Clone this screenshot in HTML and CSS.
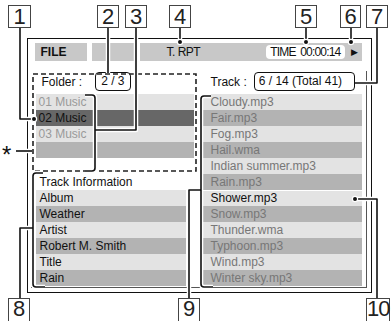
FILE: index.html
```html
<!doctype html>
<html>
<head>
    <meta charset="utf-8" />
    <title>File screen</title>
    <link rel="stylesheet" href="styles.css">
</head>
<body>

<div class="page">

    <div class="panel">
        <div class="bar">
            <span class="tag file">FILE</span>
            <span class="tag blank"></span>
            <div class="tag main">
                <span class="title">T. RPT</span>
                <span class="time">TIME 00:00:14</span>
                <span class="play">&#9654;</span>
            </div>
        </div>

        <div class="screen">
            <div class="left">
                <div class="folders">
                    <div class="head">Folder : <span class="pill">2 / 3</span></div>
                    <div class="row light dim">01 Music</div>
                    <div class="row sel">02 Music</div>
                    <div class="row light dim">03 Music</div>
                    <div class="row dark"></div>
                </div>
                <div class="info">
                    <div class="row plain">Track Information</div>
                    <div class="row light">Album</div>
                    <div class="row dark">Weather</div>
                    <div class="row light">Artist</div>
                    <div class="row dark">Robert M. Smith</div>
                    <div class="row light">Title</div>
                    <div class="row dark">Rain</div>
                </div>
            </div>

            <div class="right">
                <div class="head">Track : <span class="pill wide">6 / 14 (Total 41)</span></div>
                <div class="tracks">
                    <div class="row light dim">Cloudy.mp3</div>
                    <div class="row dark dim">Fair.mp3</div>
                    <div class="row light dim">Fog.mp3</div>
                    <div class="row dark dim">Hail.wma</div>
                    <div class="row light dim">Indian summer.mp3</div>
                    <div class="row dark dim">Rain.mp3</div>
                    <div class="row light now">Shower.mp3</div>
                    <div class="row dark dim">Snow.mp3</div>
                    <div class="row light dim">Thunder.wma</div>
                    <div class="row dark dim">Typhoon.mp3</div>
                    <div class="row light dim">Wind.mp3</div>
                    <div class="row dark dim">Winter sky.mp3</div>
                </div>
            </div>
        </div>
    </div>

    <!-- callout lines, brackets and the dashed folder frame -->
    <svg class="callouts" width="391" height="321" viewBox="0 0 391 321">
        <rect x="33" y="74" width="163" height="97" fill="none" stroke="#222" stroke-width="1.6" stroke-dasharray="5 3"/>
        <g fill="none" stroke="#fff" stroke-width="4.5" stroke-linejoin="round">
            <path d="M20 28 V119 H33"/>
            <path d="M108 28 V73"/>
            <path d="M136 28 V130 H95"/>
            <path d="M85 95 H92 Q95 95 95 98 V168 Q95 171 92 171 H85"/>
            <path d="M180 28 V42"/>
            <path d="M306 28 V42"/>
            <path d="M351 28 V42"/>
            <path d="M377 28 V83 H355"/>
            <path d="M20 298 V228 H33"/>
            <path d="M43 173 H36 Q33 173 33 176 V284 Q33 287 36 287 H45"/>
            <path d="M189 298 V190 H201"/>
            <path d="M211 96 H204 Q201 96 201 99 V284 Q201 287 204 287 H213"/>
            <path d="M377 298 V199 H356"/>
            <path d="M16 151 H32"/>
        </g>
        <g fill="none" stroke="#111" stroke-width="1.6" stroke-linejoin="round">
            <path d="M20 28 V119 H33"/>
            <path d="M108 28 V73"/>
            <path d="M136 28 V130 H95"/>
            <path d="M85 95 H92 Q95 95 95 98 V168 Q95 171 92 171 H85"/>
            <path d="M180 28 V42"/>
            <path d="M306 28 V42"/>
            <path d="M351 28 V42"/>
            <path d="M377 28 V83 H355"/>
            <path d="M20 298 V228 H33"/>
            <path d="M43 173 H36 Q33 173 33 176 V284 Q33 287 36 287 H45"/>
            <path d="M189 298 V190 H201"/>
            <path d="M211 96 H204 Q201 96 201 99 V284 Q201 287 204 287 H213"/>
            <path d="M377 298 V199 H356"/>
            <path d="M16 151 H32"/>
        </g>
        <g fill="#111" stroke="#fff" stroke-width="1.2">
            <circle cx="34" cy="119" r="2.6"/>
            <circle cx="180" cy="42" r="2.6"/>
            <circle cx="306" cy="42" r="2.6"/>
            <circle cx="351" cy="42" r="2.6"/>
            <circle cx="355" cy="199" r="2.6"/>
        </g>
    </svg>

    <div class="num n1">1</div>
    <div class="num n2">2</div>
    <div class="num n3">3</div>
    <div class="num n4">4</div>
    <div class="num n5">5</div>
    <div class="num n6">6</div>
    <div class="num n7">7</div>
    <div class="num low n8">8</div>
    <div class="num low n9">9</div>
    <div class="num low n10">10</div>
    <div class="star">*</div>

</div>

</body>
</html>
```

FILE: styles.css
```css
body{
    margin:0;
    background:#fff;
    font-family:"Liberation Sans", Arial, sans-serif;
    font-size:12px;
    color:#111;
}

.page{
    position:relative;
    width:391px;
    height:321px;
    overflow:hidden;
    padding:38px 0 0 27px;
    box-sizing:border-box;
}

/* ===== outer frame ===== */

.panel{
    width:345px;
    height:255px;
    border:1.5px solid #111;
    box-sizing:border-box;
}

.bar{
    display:flex;
    gap:5px;
    height:18px;
    margin:3.5px 0 0 6.5px;
}

.tag{
    background:#c8c8c8;
    height:18px;
    line-height:18px;
}

.file{
    width:52px;
    padding-left:6px;
    box-sizing:border-box;
    font-weight:bold;
}

.blank{
    width:43px;
}

.main{
    width:222px;
    display:flex;
    align-items:center;
}

.title{
    margin-left:27px;
    letter-spacing:-0.5px;
}

.time{
    margin-left:auto;
    background:#fff;
    border-radius:4px;
    height:14px;
    line-height:14px;
    padding:0 4px;
    letter-spacing:-0.8px;
    word-spacing:2px;
}

.play{
    font-size:9px;
    margin:0 4px 0 6px;
}

/* ===== screen ===== */

.screen{
    display:flex;
    gap:6px;
    width:336px;
    height:217px;
    margin:10.5px 0 0 2.5px;
    padding:2px 0 0 2px;
    box-sizing:border-box;
    border-right:1px solid #555;
    border-bottom:1px solid #555;
}

.left{
    width:164px;
}

.folders{
    height:97px;
    padding:0 3px;
    box-sizing:border-box;
}

.head{
    display:flex;
    align-items:flex-start;
    height:21px;
    line-height:19px;
}

.folders .head{
    padding-left:6px;
}

.pill{
    border:1.6px solid #111;
    border-radius:4px;
    height:19px;
    line-height:16px;
    box-sizing:border-box;
    padding:0 5px;
    margin:-1px 0 0 13px;
}

.pill.wide{
    width:101px;
    padding:0 4px;
    margin:-1px 0 0 7px;
}

.row{
    height:16px;
    line-height:16px;
    padding-left:3px;
    white-space:nowrap;
}

.info{
    width:150px;
    margin:4px 0 0 3px;
}

.info .row{
    padding-left:4px;
}

.light{
    background:#e3e3e3;
}

.dark{
    background:#b3b3b3;
}

.sel{
    background:#676767;
    color:#111;
}

.dim{
    color:#777;
}

.folders .dim{
    color:#9a9a9a;
}

.right{
    width:159px;
}

.right .head{
    padding-left:8px;
}

.tracks .row{
    padding-left:8px;
}

.now{
    color:#111;
    box-shadow:inset 0 1px 0 #fff;
}

/* ===== callouts ===== */

.callouts{
    position:absolute;
    left:0;
    top:0;
}

.num{
    position:absolute;
    top:5px;
    width:22px;
    height:23px;
    border:1px solid #444;
    background:#fff;
    box-sizing:border-box;
    text-align:center;
    font-size:22px;
    line-height:22px;
    color:#222;
}

.num.low{
    top:298px;
    height:23px;
    line-height:18px;
    padding-top:1px;
    border-bottom:none;
}

.n1{ left:8px; width:23px; }
.n2{ left:97px; }
.n3{ left:125px; }
.n4{ left:169px; }
.n5{ left:295px; }
.n6{ left:340px; width:21px; }
.n7{ left:366px; }
.n8{ left:8px; }
.n9{ left:178px; }
.n10{ left:366px; width:24px; letter-spacing:-1px; }

.star{
    position:absolute;
    left:2px;
    top:143px;
    font-size:24px;
    line-height:24px;
}
```
